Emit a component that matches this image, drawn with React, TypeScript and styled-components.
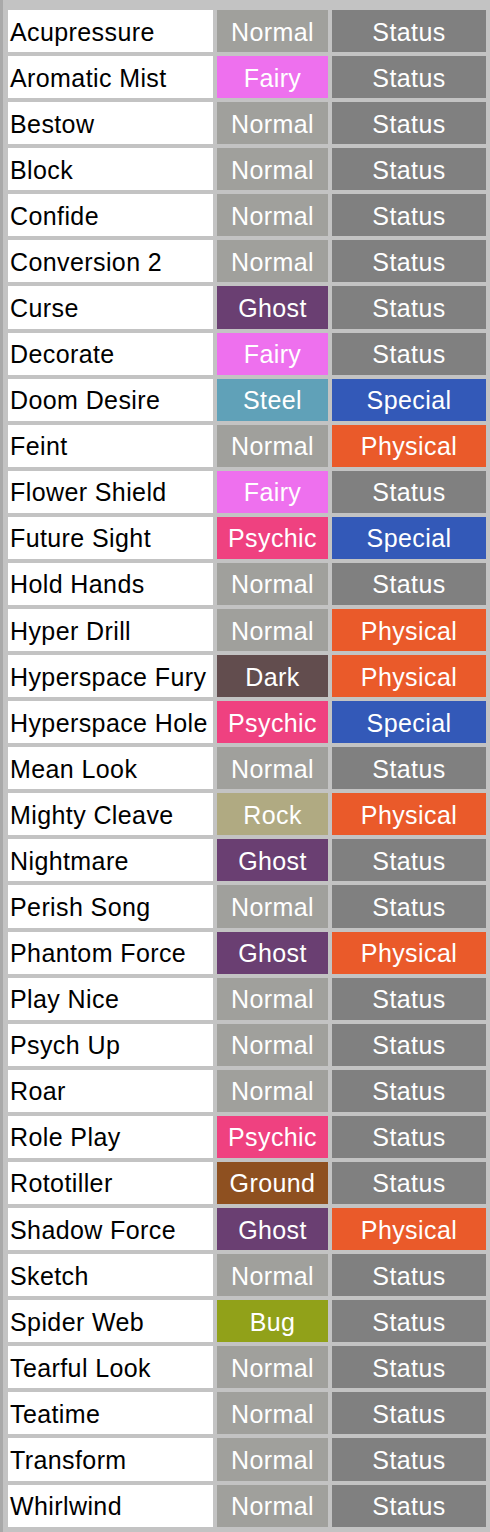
import styled, { createGlobalStyle } from "styled-components";

const GlobalStyle = createGlobalStyle`
  html, body {
    margin: 0;
    padding: 0;
    background: #c3c3c3;
  }
`;

const typeColors: Record<string, string> = {
  Normal: "#a0a09c",
  Fairy: "#ee70ee",
  Ghost: "#6a3f72",
  Steel: "#60a1b8",
  Psychic: "#ef4180",
  Dark: "#624d4e",
  Rock: "#b0aa82",
  Ground: "#8e5020",
  Bug: "#91a119",
};

const categoryColors: Record<string, string> = {
  Status: "#808080",
  Special: "#3359b8",
  Physical: "#ea5a2a",
};

const moves: [string, string, string][] = [
  ["Acupressure", "Normal", "Status"],
  ["Aromatic Mist", "Fairy", "Status"],
  ["Bestow", "Normal", "Status"],
  ["Block", "Normal", "Status"],
  ["Confide", "Normal", "Status"],
  ["Conversion 2", "Normal", "Status"],
  ["Curse", "Ghost", "Status"],
  ["Decorate", "Fairy", "Status"],
  ["Doom Desire", "Steel", "Special"],
  ["Feint", "Normal", "Physical"],
  ["Flower Shield", "Fairy", "Status"],
  ["Future Sight", "Psychic", "Special"],
  ["Hold Hands", "Normal", "Status"],
  ["Hyper Drill", "Normal", "Physical"],
  ["Hyperspace Fury", "Dark", "Physical"],
  ["Hyperspace Hole", "Psychic", "Special"],
  ["Mean Look", "Normal", "Status"],
  ["Mighty Cleave", "Rock", "Physical"],
  ["Nightmare", "Ghost", "Status"],
  ["Perish Song", "Normal", "Status"],
  ["Phantom Force", "Ghost", "Physical"],
  ["Play Nice", "Normal", "Status"],
  ["Psych Up", "Normal", "Status"],
  ["Roar", "Normal", "Status"],
  ["Role Play", "Psychic", "Status"],
  ["Rototiller", "Ground", "Status"],
  ["Shadow Force", "Ghost", "Physical"],
  ["Sketch", "Normal", "Status"],
  ["Spider Web", "Bug", "Status"],
  ["Tearful Look", "Normal", "Status"],
  ["Teatime", "Normal", "Status"],
  ["Transform", "Normal", "Status"],
  ["Whirlwind", "Normal", "Status"],
];

const MoveTable = styled.div`
  border-left: 3px solid #a9a9a9;
  padding: 10px 4px 5px 5px;
  display: grid;
  grid-template-columns: 205px 111px 154px;
  grid-auto-rows: 42.09px;
  gap: 4px;
  font-family: "Liberation Sans", Arial, sans-serif;
  font-size: 25px;
  letter-spacing: 0.4px;
`;

const NameCell = styled.div`
  background: #ffffff;
  color: #000000;
  display: flex;
  align-items: center;
  padding: 2px 0 0 2px;
  white-space: nowrap;
  overflow: hidden;
`;

const BadgeCell = styled.div<{ $bg: string }>`
  background: ${(props) => props.$bg};
  color: #ffffff;
  display: flex;
  align-items: center;
  justify-content: center;
  padding-top: 2px;
  white-space: nowrap;
`;

export default function App() {
  return (
    <>
      <GlobalStyle />
      <MoveTable>
        {moves.map(([name, type, category]) => (
          <>
            <NameCell key={name}>{name}</NameCell>
            <BadgeCell key={name + "-t"} $bg={typeColors[type]}>
              {type}
            </BadgeCell>
            <BadgeCell key={name + "-c"} $bg={categoryColors[category]}>
              {category}
            </BadgeCell>
          </>
        ))}
      </MoveTable>
    </>
  );
}
